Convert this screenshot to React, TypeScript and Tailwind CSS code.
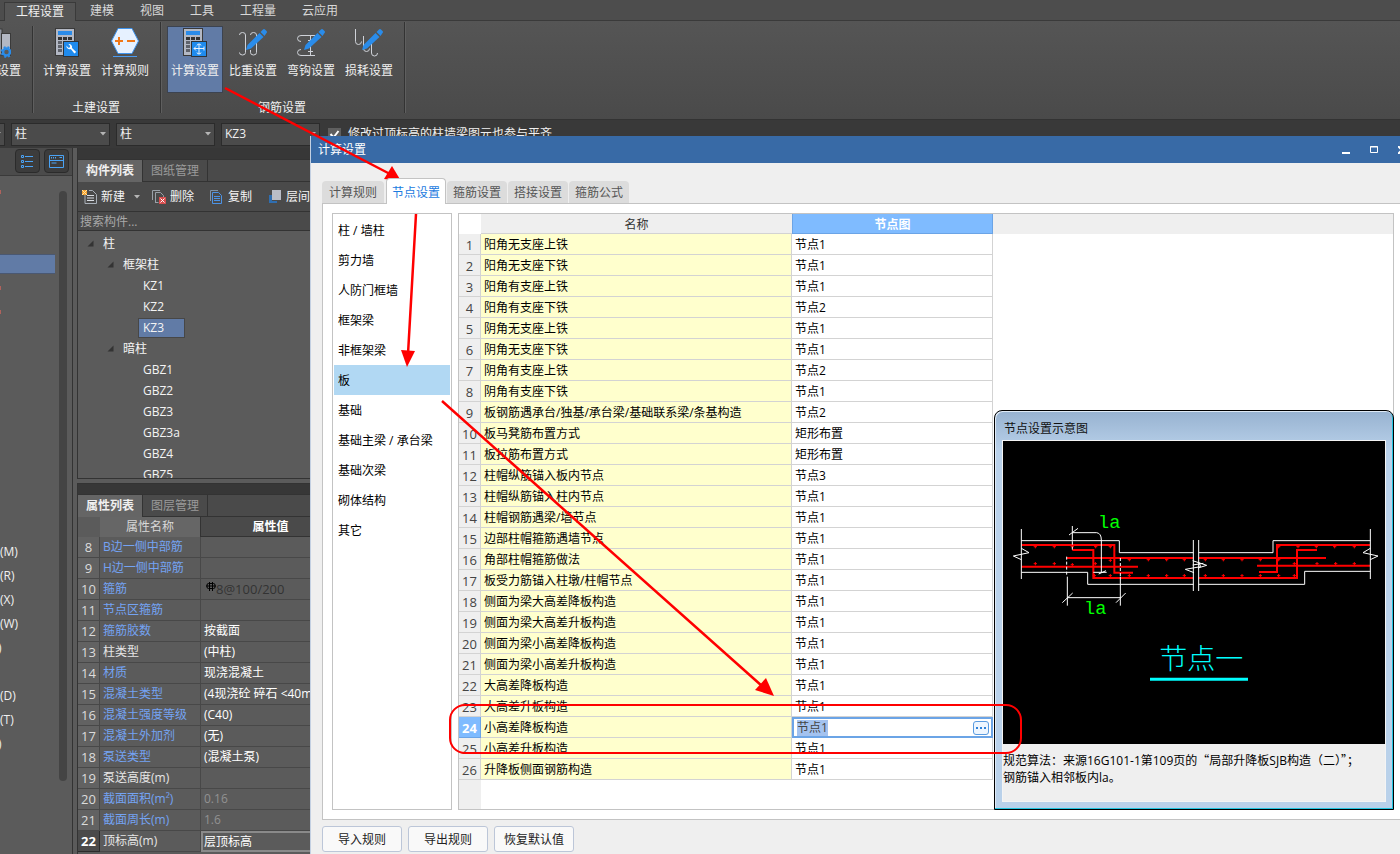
import { useState } from "react";
import type { ReactNode } from "react";
import { clsx } from "clsx";

const MENU_TABS = ["工程设置", "建模", "视图", "工具", "工程量", "云应用"];

const DIALOG_TABS = ["计算规则", "节点设置", "箍筋设置", "搭接设置", "箍筋公式"];

const CATEGORIES = [
  "柱 / 墙柱", "剪力墙", "人防门框墙", "框架梁", "非框架梁", "板",
  "基础", "基础主梁 / 承台梁", "基础次梁", "砌体结构", "其它",
];

const NODES: [string, string][] = [
  ["阳角无支座上铁", "节点1"],
  ["阳角无支座下铁", "节点1"],
  ["阳角有支座上铁", "节点1"],
  ["阳角有支座下铁", "节点2"],
  ["阴角无支座上铁", "节点1"],
  ["阴角无支座下铁", "节点1"],
  ["阴角有支座上铁", "节点2"],
  ["阴角有支座下铁", "节点1"],
  ["板钢筋遇承台/独基/承台梁/基础联系梁/条基构造", "节点2"],
  ["板马凳筋布置方式", "矩形布置"],
  ["板拉筋布置方式", "矩形布置"],
  ["柱帽纵筋锚入板内节点", "节点3"],
  ["柱帽纵筋锚入柱内节点", "节点1"],
  ["柱帽钢筋遇梁/墙节点", "节点1"],
  ["边部柱帽箍筋遇墙节点", "节点1"],
  ["角部柱帽箍筋做法", "节点1"],
  ["板受力筋锚入柱墩/柱帽节点", "节点1"],
  ["侧面为梁大高差降板构造", "节点1"],
  ["侧面为梁大高差升板构造", "节点1"],
  ["侧面为梁小高差降板构造", "节点1"],
  ["侧面为梁小高差升板构造", "节点1"],
  ["大高差降板构造", "节点1"],
  ["大高差升板构造", "节点1"],
  ["小高差降板构造", "节点1"],
  ["小高差升板构造", "节点1"],
  ["升降板侧面钢筋构造", "节点1"],
];

type Prop = { no: number; name: string; value: string; plain?: boolean; dim?: boolean };

const PROPS: Prop[] = [
  { no: 8, name: "B边一侧中部筋", value: "" },
  { no: 9, name: "H边一侧中部筋", value: "" },
  { no: 10, name: "箍筋", value: "8@100/200" },
  { no: 11, name: "节点区箍筋", value: "" },
  { no: 12, name: "箍筋胶数", value: "按截面" },
  { no: 13, name: "柱类型", value: "(中柱)", plain: true },
  { no: 14, name: "材质", value: "现浇混凝土" },
  { no: 15, name: "混凝土类型", value: "(4现浇砼 碎石 <40mm)" },
  { no: 16, name: "混凝土强度等级", value: "(C40)" },
  { no: 17, name: "混凝土外加剂", value: "(无)" },
  { no: 18, name: "泵送类型", value: "(混凝土泵)" },
  { no: 19, name: "泵送高度(m)", value: "", plain: true },
  { no: 20, name: "截面面积(m²)", value: "0.16", dim: true },
  { no: 21, name: "截面周长(m)", value: "1.6", dim: true },
  { no: 22, name: "顶标高(m)", value: "层顶标高", plain: true },
];

const TREE = [
  { label: "柱", level: 0 },
  { label: "框架柱", level: 1 },
  { label: "KZ1", level: 2 },
  { label: "KZ2", level: 2 },
  { label: "KZ3", level: 2 },
  { label: "暗柱", level: 1 },
  { label: "GBZ1", level: 2 },
  { label: "GBZ2", level: 2 },
  { label: "GBZ3", level: 2 },
  { label: "GBZ3a", level: 2 },
  { label: "GBZ4", level: 2 },
  { label: "GBZ5", level: 2 },
];

// "·" rows only show the edge of a marker, "" rows are empty
const SIDE_ROWS = [
  "·", "", "", "sel", "·", "·", "", "", "", "", "", "", "", "", "",
  "(M)", "(R)", "(X)", "(W)", ")", "", "(D)", "(T)", ")",
];

/* ---------- icons ---------- */

function CalcBody() {
  return (
    <>
      <rect x="2.5" y="0.5" width="19" height="27" fill="#b3b8c4" stroke="#3a3a3a" />
      <rect x="5" y="3" width="14" height="4" fill="#2a8be9" />
      {[9, 13, 17, 21].map(y =>
        [5, 10, 15].map(x => <rect key={`${x}-${y}`} x={x} y={y} width="4" height="3" fill={y === 9 ? "#333" : "#5e626b"} />)
      )}
      <rect x="10.5" y="13.5" width="15" height="15" fill="#1f8bee" stroke="#2f3338" />
    </>
  );
}

function CalcWrenchIcon() {
  return (
    <svg width="28" height="30" viewBox="0 0 28 30">
      <CalcBody />
      <path d="M13.5 17.5a3.2 3.2 0 0 0 4.3 3.6l3.6 4.4 1.8-1.6-4.2-3.8a3.2 3.2 0 0 0-3.6-4l1.8 1.8-.4 1.6-1.6.2z" fill="#fff" />
    </svg>
  );
}

function CalcRebarIcon() {
  return (
    <svg width="28" height="30" viewBox="0 0 28 30">
      <CalcBody />
      <path d="M13 20.500h10M13 20.500l2 2M13 20.500l2-2M23 18.500v4M18 16v10M16 17.500q0-1.500 2-1.500t2 1.500M16 24.500q0 1.500 2 1.500t2-1.500" fill="none" stroke="#e8f2ff" />
    </svg>
  );
}

function HexIcon() {
  return (
    <svg width="28" height="30" viewBox="0 0 28 30">
      <path d="M.5 13 7 .5h14L27.500 13 21 25.500H7z" fill="#e6f1ff" stroke="#3f93ec" />
      <path d="M4 13h8M8 9v8M16 13h8" stroke="#f07818" strokeWidth="2" />
      <path d="M2 28.500h24" stroke="#4b9bf0" />
    </svg>
  );
}

function Pencil() {
  return (
    <>
      <path d="M7 22l1.500-5L20.500 5l4 4L12 20.500z" fill="#2a8cea" />
      <path d="M21.500 4l2.500-2.500q1-1 2 0l1.500 1.500q1 1 0 2L25.500 8z" fill="#2a8cea" />
    </>
  );
}

function RatioIcon() {
  return (
    <svg width="28" height="30" viewBox="0 0 28 30">
      <path d="M.5 7q0-2.500 3-2.500t3 2.500v17.500q0 2.500-3 2.500t-3-2.500M11.500 7q0-2.500 3-2.500t3 2.500v17.500q0 2.500-3 2.500t-3-2.500V22" fill="none" stroke="#cfd2d8" />
      <Pencil />
    </svg>
  );
}

function HookIcon() {
  return (
    <svg width="28" height="30" viewBox="0 0 28 30">
      <path d="M18 7.500H4Q.5 7.500.5 10.500T4 13.500M13.500 8v19M11 12.500h5M11 23.500h5M4 21.500Q.5 21.500.5 24.500T4 27.500h14" fill="none" stroke="#cfd2d8" />
      <Pencil />
    </svg>
  );
}

function LossIcon() {
  return (
    <svg width="28" height="30" viewBox="0 0 28 30">
      <path d="M.5 1v12.500q0 3 3 3t3-3M8.500 8v12.500q0 3 3 3t3-3M16.500 15v10q0 3 3 3t3-3" fill="none" stroke="#cfd2d8" />
      <Pencil />
    </svg>
  );
}

function GearPanelIcon() {
  return (
    <svg width="28" height="30" viewBox="0 0 28 30">
      <rect x="12" y="1" width="7" height="26" fill="#8f949e" stroke="#3a3a3a" />
      <rect x="18.500" y="5.500" width="9" height="22" fill="#b3b8c4" stroke="#3a3a3a" />
      <circle cx="23.500" cy="24" r="3.500" fill="#5a5a5a" stroke="#2a8cea" strokeWidth="2.500" />
      <circle cx="23.500" cy="24" r="5" fill="none" stroke="#2a8cea" strokeWidth="1.500" strokeDasharray="2 2" />
    </svg>
  );
}

function NewIcon() {
  return (
    <svg width="16" height="16" viewBox="0 0 16 16" fill="none">
      <path d="M3 6v8.500h11.500v-9L10.500 1.500H7" stroke="#a9b0b8" />
      <path d="M5 6.500h7M5 9h7M5 11.500h7" stroke="#d8dce2" />
      <rect x="0" y="1" width="5" height="5" fill="#f7a32c" />
      <path d="M0 1l5 5M5 1L0 6" stroke="#ffe2a8" />
    </svg>
  );
}

function DeleteIcon() {
  return (
    <svg width="16" height="16" viewBox="0 0 16 16" fill="none">
      <path d="M1.500 11V1.500H9M4.500 14V3.500h5l3 3V8M4.500 13.500h3" stroke="#9aa1a9" />
      <rect x="8" y="8" width="7" height="7" fill="#d64d4d" />
      <path d="M9.500 9.500l4 4M13.500 9.500l-4 4" stroke="#fff" />
    </svg>
  );
}

function CopyIcon() {
  return (
    <svg width="16" height="16" viewBox="0 0 16 16" fill="none">
      <path d="M1.500 12V1.500H9" stroke="#7f93a8" />
      <path d="M3.500 3.500h6l3 3v8h-9z" stroke="#4c93e6" />
      <path d="M5 7.500h6M5 9.500h6M5 11.500h6" stroke="#4c93e6" />
    </svg>
  );
}

function LayerIcon() {
  return (
    <svg width="16" height="16" viewBox="0 0 16 16">
      <path d="M2 6v8h8v-2H5V6z" fill="#2f6eb0" />
      <rect x="5" y="1" width="9" height="10" fill="#b9bdc7" />
    </svg>
  );
}

function DropArrow() {
  return (
    <svg width="6" height="4" viewBox="0 0 6 4" className="shrink-0">
      <path d="M0 0h6L3 3.500z" fill="#b5b5b5" />
    </svg>
  );
}

/* ---------- ribbon ---------- */

function RibbonButton({ label, icon, active }: { label: string; icon: ReactNode; active?: boolean }) {
  return (
    <button
      className={clsx(
        "flex h-[67px] w-14 shrink-0 flex-col items-center gap-[3px] border pt-px whitespace-nowrap",
        active ? "border-[#3c4350] bg-[#617ba6]" : "border-transparent"
      )}
    >
      {icon}
      <span className="leading-5">{label}</span>
    </button>
  );
}

function RibbonGroup({ title, children }: { title: string; children: ReactNode }) {
  return (
    <div className="flex">
      <div className="flex flex-col justify-between pr-[7px] pl-[5px]">
        <div className="flex gap-0.5">{children}</div>
        <p className="text-center leading-[18px]">{title}</p>
      </div>
      <Divider />
    </div>
  );
}

function Divider() {
  return <div className="-mt-1 mb-1 w-0.5 shrink-0 border-l border-[#333] bg-[#5f5f5f]" />;
}

function Ribbon() {
  return (
    <header className="text-[#f0f0f0]">
      <nav className="flex h-[21px] items-end border-b border-[#3a3a3a] bg-[#4d4d4d] pl-1">
        {MENU_TABS.map((tab, i) => (
          <button
            key={tab}
            className={clsx(
              "leading-[18px] whitespace-nowrap",
              i === 0
                ? "-mb-px border border-b-0 border-[#3a3a3a] bg-[#555] px-[11px] mr-px"
                : "px-[13px] text-[#d8d8d8]"
            )}
          >
            {tab}
          </button>
        ))}
      </nav>
      <div className="flex h-[99px] border-b border-[#333] bg-linear-to-b from-[#555] to-[#4a4a4a] pt-[5px] pb-0.5">
        <div className="flex w-[34px] justify-end overflow-hidden">
          <div className="mr-[7px]">
            <RibbonButton label="楼层设置" icon={<GearPanelIcon />} />
          </div>
          <Divider />
        </div>
        <RibbonGroup title="土建设置">
          <RibbonButton label="计算设置" icon={<CalcWrenchIcon />} />
          <RibbonButton label="计算规则" icon={<HexIcon />} />
        </RibbonGroup>
        <RibbonGroup title="钢筋设置">
          <RibbonButton label="计算设置" icon={<CalcRebarIcon />} active />
          <RibbonButton label="比重设置" icon={<RatioIcon />} />
          <RibbonButton label="弯钩设置" icon={<HookIcon />} />
          <RibbonButton label="损耗设置" icon={<LossIcon />} />
        </RibbonGroup>
      </div>
    </header>
  );
}

function ToolSelect({ value, label }: { value: string; label: string }) {
  return (
    <div className="flex h-[23px] w-[99px] shrink-0 items-center border border-[#2b2b2b] bg-[#4b4b4b] pr-[3px]">
      <select aria-label={label} defaultValue={value} className="h-full min-w-0 flex-1 appearance-none bg-transparent pl-[3px] outline-none">
        <option>{value}</option>
      </select>
      <DropArrow />
    </div>
  );
}

function FilterBar() {
  return (
    <div className="flex h-7 items-center gap-1.5 bg-[#393939] text-[#f0f0f0]">
      <div className="flex w-[5px] justify-end overflow-hidden">
        <ToolSelect value="" label="楼层" />
      </div>
      <ToolSelect value="柱" label="构件类别" />
      <ToolSelect value="柱" label="构件类型" />
      <ToolSelect value="KZ3" label="构件" />
      <label className="flex items-center gap-[7px] pl-0.5 whitespace-nowrap">
        <input type="checkbox" defaultChecked className="sr-only" />
        <svg width="13" height="13" viewBox="0 0 13 13" className="bg-[#5f5f5f]">
          <path d="M2.500 6l3 3.500L10.500 3" fill="none" stroke="#fff" strokeWidth="2" />
        </svg>
        修改过顶标高的柱墙梁图元也参与平齐
      </label>
    </div>
  );
}

/* ---------- left side ---------- */

function SideNav() {
  return (
    <aside className="flex w-[73px] shrink-0 flex-col border-r border-[#333] bg-[#5b5b5b] text-[#f0f0f0]">
      <div className="flex h-[28px] justify-end gap-1 border-b border-[#3a3a3a] bg-[#4b4b4b] pt-px pr-[3px]">
        <button aria-label="列表" className="grid h-6 w-[25px] place-items-center rounded border border-[#2b2b2b] bg-[#3c3c3c]">
          <svg width="13" height="13" viewBox="0 0 13 13" fill="none" stroke="#4aa3f5">
            <path d="M4 1.500h8M4 6.500h8M4 11.500h8M.5.500h2v2h-2zM.5 5.500h2v2h-2zM.5 10.500h2v2h-2z" />
          </svg>
        </button>
        <button aria-label="面板" className="grid h-6 w-[25px] place-items-center rounded border border-[#2b2b2b] bg-[#3c3c3c]">
          <svg width="15" height="13" viewBox="0 0 15 13" fill="none" stroke="#4aa3f5">
            <path d="M.5.500h14v12H.5zM1 5.500h13M2.500 2v1.500M4.500 2v1.500M6.500 2v1.500M10.500 2.500h2.500M2.500 8h5" />
          </svg>
        </button>
      </div>
      <div className="flex flex-1 justify-between pr-[5px]">
        <ul className="w-[55px] pt-1">
          {SIDE_ROWS.map((row, i) => (
            <li key={i} className="flex h-6 items-center">
              {row === "sel" && <span className="h-5 w-full border-y border-[#4a5872] bg-[#617ba6]" />}
              {row === "·" && <span className="h-1 w-px bg-[#b0625c]" />}
              {row.endsWith(")") && <span className={clsx(row === ")" && "-ml-0.5")}>{row}</span>}
            </li>
          ))}
        </ul>
        <div className="mt-[15px] h-[590px] w-2 rounded-full bg-[#444]" />
      </div>
    </aside>
  );
}

function PanelTabs({ tabs }: { tabs: string[] }) {
  return (
    <div className="flex h-[22px] shrink-0 bg-[#4a4a4a]">
      {tabs.map((tab, i) => (
        <button
          key={tab}
          className={clsx(
            "w-[65px] border-r border-[#333] whitespace-nowrap",
            i === 0 ? "bg-[#656565] font-bold text-[#f0f0f0]" : "border-b text-[#9a9a9a]"
          )}
        >
          {tab}
        </button>
      ))}
      <div className="flex-1 border-b border-[#333]" />
    </div>
  );
}

function ComponentPanel() {
  return (
    <section className="flex h-[331px] shrink-0 flex-col border-b border-l border-[#333] bg-[#5b5b5b] text-[#f4f4f4]">
      <div className="h-3 shrink-0 border-b border-[#333] bg-[#373737]" />
      <PanelTabs tabs={["构件列表", "图纸管理"]} />
      <div className="flex h-[30px] shrink-0 items-center border-b border-[#333] bg-[#4a4a4a] pl-1 whitespace-nowrap">
        <button className="flex items-center gap-[3px]">
          <NewIcon />
          新建
          <span className="pl-1.5"><DropArrow /></span>
        </button>
        <button className="ml-[11px] flex items-center gap-[3px]">
          <DeleteIcon />
          删除
        </button>
        <button className="ml-[15px] flex items-center gap-[3px]">
          <CopyIcon />
          复制
        </button>
        <button className="ml-[15px] flex items-center gap-[3px]">
          <LayerIcon />
          层间复制
        </button>
      </div>
      <input
        aria-label="搜索构件"
        placeholder="搜索构件..."
        className="h-[19px] shrink-0 border-b border-[#333] bg-[#4a4a4a] pl-0.5 outline-none placeholder:text-[#a8a8a8]"
      />
      <ul className="flex-1 overflow-hidden pt-0.5">
        {TREE.map(node => (
          <li
            key={node.label}
            className={clsx(
              "flex h-[21px] items-center",
              node.level === 0 && "pl-[9px]",
              node.level === 1 && "pl-[29px]",
              node.level === 2 && "pl-[60px]"
            )}
          >
            {node.level < 2 && (
              <svg width="7" height="7" viewBox="0 0 7 7" className="mr-[9px]">
                <path d="M6.500.5v6H.5z" fill="#333" />
              </svg>
            )}
            <span
              className={clsx(
                "leading-[18px]",
                node.level === 2 && "border px-1",
                node.label === "KZ3" ? "w-[47px] border-[#474747] bg-[#617ba6]" : "border-transparent"
              )}
            >
              {node.label}
            </span>
          </li>
        ))}
      </ul>
    </section>
  );
}

function PropValue({ prop }: { prop: Prop }) {
  if (prop.no === 10) {
    return (
      <span className="flex items-center pl-0.5 text-[#333]">
        <svg width="10" height="10" viewBox="0 0 10 10" fill="none" stroke="#000" className="mb-1 shrink-0">
          <path d="M2.500 1.500h5q1.500 0 1.500 1.500v2q0 1.500-1.500 1.500h-5Q1 6.500 1 5V3q0-1.500 1.500-1.500zM3.500 0v9M6.500 0v9M0 4h10" />
        </svg>
        <span className="text-[13px]">{prop.value}</span>
      </span>
    );
  }
  return <>{prop.value}</>;
}

function PropertyPanel() {
  return (
    <section className="flex min-h-0 flex-1 flex-col overflow-hidden border-l border-[#333] bg-[#5b5b5b]">
      <div className="h-3 shrink-0 border-y border-[#333] bg-[#373737]" />
      <PanelTabs tabs={["属性列表", "图层管理"]} />
      <table className="w-full table-fixed border-separate border-spacing-0">
        <colgroup>
          <col className="w-[22px]" />
          <col className="w-[101px]" />
          <col />
        </colgroup>
        <thead>
          <tr className="h-5">
            <th className="bg-[#5b5b5b]" />
            <th className="border-r border-[#333] bg-[#666] font-normal text-[#d8d8d8]">属性名称</th>
            <th className="border-b border-[#333] bg-[#4a4a4a] text-white">属性值</th>
          </tr>
        </thead>
        <tbody>
          {PROPS.map(prop => {
            const current = prop.no === 22;
            return (
              <tr key={prop.no} className="h-[21px] leading-5 whitespace-nowrap">
                <td
                  className={clsx(
                    "border-r border-b text-center text-[13px]",
                    current
                      ? "border-[#2b2b2b] bg-[#4a4a4a] font-bold text-white"
                      : "border-[#484848] bg-[#626262] text-[#dcdcdc]"
                  )}
                >
                  {prop.no}
                </td>
                <td className={clsx("overflow-hidden border-r border-b border-[#484848] pl-[3px]", prop.plain ? "text-[#e6e6e6]" : "text-[#74a3f3]")}>
                  {prop.name}
                </td>
                <td
                  className={clsx(
                    "overflow-hidden",
                    current ? "border-2 border-[#8a8a8a] pl-px leading-[17px]" : "border-b border-[#484848] pl-[3px]",
                    prop.dim ? "text-[#929292]" : "text-white"
                  )}
                >
                  <PropValue prop={prop} />
                </td>
              </tr>
            );
          })}
        </tbody>
      </table>
    </section>
  );
}

/* ---------- node preview ---------- */

const DOTS: [number, number][] = [
  [136, 440], [193, 440], [247, 440], [317, 440], [361, 440],
  [136, 491], [193, 491], [247, 494], [316, 491], [361, 481],
  [418, 479], [475, 479], [530, 479], [583, 479], [646, 479], [700, 479], [756, 479], [811, 479], [866, 479],
  [313, 527], [361, 527], [418, 527], [475, 527], [530, 527], [583, 527], [646, 527], [700, 527], [756, 527], [811, 527], [866, 527], [913, 527],
  [866, 440], [924, 440], [979, 440], [1034, 440], [1093, 440],
  [913, 491], [981, 491], [1037, 491], [1093, 491],
];

function NodeDrawing() {
  return (
    <svg viewBox="39 123 1146 909" className="block w-full bg-black" fill="none" strokeWidth="3">
      <g stroke="#f00">
        {DOTS.map(([x, y]) => <path key={`${x}-${y}`} d={`M${x - 5} ${y}h10M${x} ${y - 5}v10`} />)}
      </g>
      <g stroke="#f00" strokeWidth="6">
        <path d="M94 435H373V518H429M247 450H310V534H610M230 474H610M94 500H444" />
        <path d="M1140 435H861V516H807M981 450H921V534H626M626 474H1008M1140 497H801" />
      </g>
      <g stroke="#fff">
        <path d="M94 387V537M94 422H388V458H610M94 517H293V553H610M610 420V573M626 420V573" />
        <path d="M1141 387V537M1141 422H849V458H626M1141 514H944V553H626" />
        <path d="M94 445L117 458 70 468 94 479M1141 445L1119 458 1164 468 1141 479" />
        <path d="M608 482L650 496 624 504M626 486L632 500 586 508 612 518M608 495L640 490" />
        <path d="M247 378V425M237 405L264 385M247 398H320Q334 400 334 420V517M310 517H350M326 522L348 512" />
        <path d="M247 425V450M230 470V530M391 474V530" strokeDasharray="9 6" />
        <path d="M232 530V617M391 530V617M232 593H391M217 608L248 579M378 608L407 579" />
      </g>
      <g fill="#0f0" className="font-['Liberation_Mono',monospace] text-[56px]">
        <text x="324" y="384">la</text>
        <text x="282" y="641">la</text>
      </g>
      <text x="508" y="808" fill="#0ff" className="font-['Noto_Sans_CJK_SC',sans-serif] text-[84px] font-light">节点一</text>
      <path d="M480 838H774" stroke="#0ff" strokeWidth="9" />
    </svg>
  );
}

function PreviewWindow() {
  return (
    <div className="absolute -right-px -bottom-px flex h-[400px] w-[400px] flex-col rounded-t-lg border border-black bg-linear-to-b from-[#97b2d0] via-[#b9d1ea] via-10% to-[#b9d1ea] px-[7px] pb-[7px] shadow-[inset_-1px_-1px_0_#22c4e0,inset_1px_1px_0_#dfeaf6]">
      <h2 className="h-[29px] pt-2 pl-0.5 leading-5 text-[#111]">节点设置示意图</h2>
      <div className="flex-1 border border-[#f4f4f4] bg-[#efefef]">
        <NodeDrawing />
        <p className="pt-[7px] leading-[17px] whitespace-nowrap text-black">
          规范算法：来源16G101-1第109页的
          <span className="font-['Noto_Sans_CJK_SC',sans-serif]">“</span>
          局部升降板SJB构造（二）
          <span className="font-['Noto_Sans_CJK_SC',sans-serif]">”；</span>
          <br />
          钢筋锚入相邻板内la。
        </p>
      </div>
    </div>
  );
}

/* ---------- dialog ---------- */

function NodeTable() {
  const [selected, setSelected] = useState(23);

  return (
    <table className="w-full table-fixed border-separate border-spacing-0">
      <colgroup>
        <col className="w-[22px]" />
        <col className="w-[311px]" />
        <col className="w-[201px]" />
        <col />
      </colgroup>
      <thead>
        <tr className="h-5 leading-[17px]">
          <th className="bg-white" />
          <th className="border-b border-[#d3d3d3] bg-[#efefef] pt-0.5 font-normal text-[#333]">名称</th>
          <th className="border border-t-0 border-[#6ba4e6] bg-[#7fbbff] pt-0.5 text-white">节点图</th>
          <th className="bg-[#efefef]" />
        </tr>
      </thead>
      <tbody>
        {NODES.map(([name, value], i) => {
          const active = i === selected;
          return (
            <tr key={name} className="h-[21px] leading-[18px] whitespace-nowrap" onClick={() => setSelected(i)}>
              <td
                className={clsx(
                  "border-r border-b pt-0.5 text-center text-[13px]",
                  active ? "border-[#6ba4e6] bg-[#7fbbff] font-bold text-white" : "border-[#d3d3d3] bg-[#efefef] text-[#444]"
                )}
              >
                {i + 1}
              </td>
              <td className="border-r border-b border-[#d3d3d3] bg-[#ffffcd] pt-0.5 pl-[3px] text-black">{name}</td>
              {active ? (
                <td className="border-2 border-[#6ba4e6]">
                  <div className="flex h-[17px] items-center justify-between pr-0.5 pl-[3px]">
                    <input aria-label={name} defaultValue={value} className="h-4 w-[31px] bg-[#a3c2ef] text-[#444] outline-none" />
                    <button
                      aria-label="选择节点"
                      className="flex h-[14px] w-4 items-center justify-center gap-0.5 rounded-[3px] border border-[#5a9be0] bg-[#eef6ff]"
                    >
                      <span className="size-0.5 bg-[#2f82d8]" />
                      <span className="size-0.5 bg-[#2f82d8]" />
                      <span className="size-0.5 bg-[#2f82d8]" />
                    </button>
                  </div>
                </td>
              ) : (
                <td className="border-r border-b border-[#d3d3d3] pt-0.5 pl-[3px] text-black">{value}</td>
              )}
              <td />
            </tr>
          );
        })}
      </tbody>
    </table>
  );
}

function SettingsDialog() {
  return (
    <div role="dialog" aria-label="计算设置" className="absolute top-[136px] right-0 bottom-0 left-[310px] flex flex-col overflow-hidden border-l border-[#c3d0e2] bg-[#efefef]">
      <div className="-ml-px flex h-[27px] shrink-0 items-center justify-between bg-[#386aa6] pl-2 text-white">
        <h1>计算设置</h1>
        <div className="-mr-4 flex">
          <button aria-label="最小化" className="grid h-[27px] w-7 place-items-center">
            <svg width="8" height="8" viewBox="0 0 8 8"><path d="M0 7h8" stroke="#fff" strokeWidth="2" /></svg>
          </button>
          <button aria-label="最大化" className="grid h-[27px] w-7 place-items-center">
            <svg width="8" height="8" viewBox="0 0 8 8" fill="none" stroke="#fff"><path d="M.5.500h7v6h-7zM0 1h8" /></svg>
          </button>
          <button aria-label="关闭" className="grid h-[27px] w-7 place-items-center">
            <svg width="8" height="8" viewBox="0 0 8 8"><path d="M0 0l8 8M8 0L0 8" stroke="#fff" strokeWidth="2" /></svg>
          </button>
        </div>
      </div>

      <div role="tablist" className="flex h-10 shrink-0 items-end gap-px pl-[11px]">
        {DIALOG_TABS.map((tab, i) => (
          <button
            key={tab}
            role="tab"
            aria-selected={i === 1}
            className={clsx(
              "rounded-t pt-0.5 whitespace-nowrap",
              i === 1
                ? "z-10 -mb-px ml-px h-[26px] w-[60px] border border-b-0 border-[#c3c3c3] bg-white text-[#1c7be0]"
                : "h-[22px] bg-[#dcdcdc] text-[#555]",
              i === 0 && "w-[62px]",
              i > 1 && "w-[60px]"
            )}
          >
            {tab}
          </button>
        ))}
      </div>

      <div className="ml-[11px] flex min-h-0 flex-1 gap-1.5 border border-r-0 border-[#c3c3c3] bg-white py-[9px] pr-1.5 pl-[9px]">
        <ul className="w-[120px] shrink-0 border border-[#c3c3c3] p-px text-black">
          {CATEGORIES.map(name => (
            <li key={name}>
              <button className={clsx("h-[30px] w-full pt-0.5 pl-1 text-left whitespace-nowrap", name === "板" && "bg-[#b1d8f3]")}>
                {name}
              </button>
            </li>
          ))}
        </ul>
        <div className="relative flex min-w-0 flex-1 flex-col border border-[#c3c3c3]">
          <NodeTable />
          <div className="w-[22px] flex-1 bg-[#efefef]" />
          <PreviewWindow />
        </div>
      </div>

      <div className="flex h-[34px] shrink-0 items-center gap-1.5 pt-1 pl-[11px]">
        {["导入规则", "导出规则", "恢复默认值"].map(label => (
          <button key={label} className="h-[26px] w-20 rounded-[3px] border border-[#bcc6d8] bg-[#f9f9f9] pt-0.5 whitespace-nowrap text-[#222]">
            {label}
          </button>
        ))}
      </div>
    </div>
  );
}

function Annotations() {
  return (
    <svg width="1400" height="854" viewBox="0 0 1400 854" className="pointer-events-none absolute top-0 left-0" fill="none" stroke="#f00">
      <path d="M225 88L390 174M416 214L408 354M442 401L762 686" strokeWidth="2.500" />
      <g fill="#f00" stroke="none">
        <path d="M401 181L392 166 384 179z" />
        <path d="M407 367L401 350 415 351z" />
        <path d="M774 696L755 690 766 678z" />
      </g>
      <rect x="450" y="705" width="571" height="48" rx="15" strokeWidth="2" />
    </svg>
  );
}

export default function App() {
  return (
    <div className="relative flex h-screen min-h-[640px] flex-col overflow-hidden bg-[#373737] font-['Open_Sans','Noto_Sans_CJK_SC',sans-serif] text-xs">
      <Ribbon />
      <FilterBar />
      <main className="flex min-h-0 flex-1">
        <SideNav />
        <div className="flex w-[267px] shrink-0 flex-col gap-1 bg-[#5b5b5b] pl-1">
          <ComponentPanel />
          <PropertyPanel />
        </div>
      </main>
      <SettingsDialog />
      <Annotations />
    </div>
  );
}
